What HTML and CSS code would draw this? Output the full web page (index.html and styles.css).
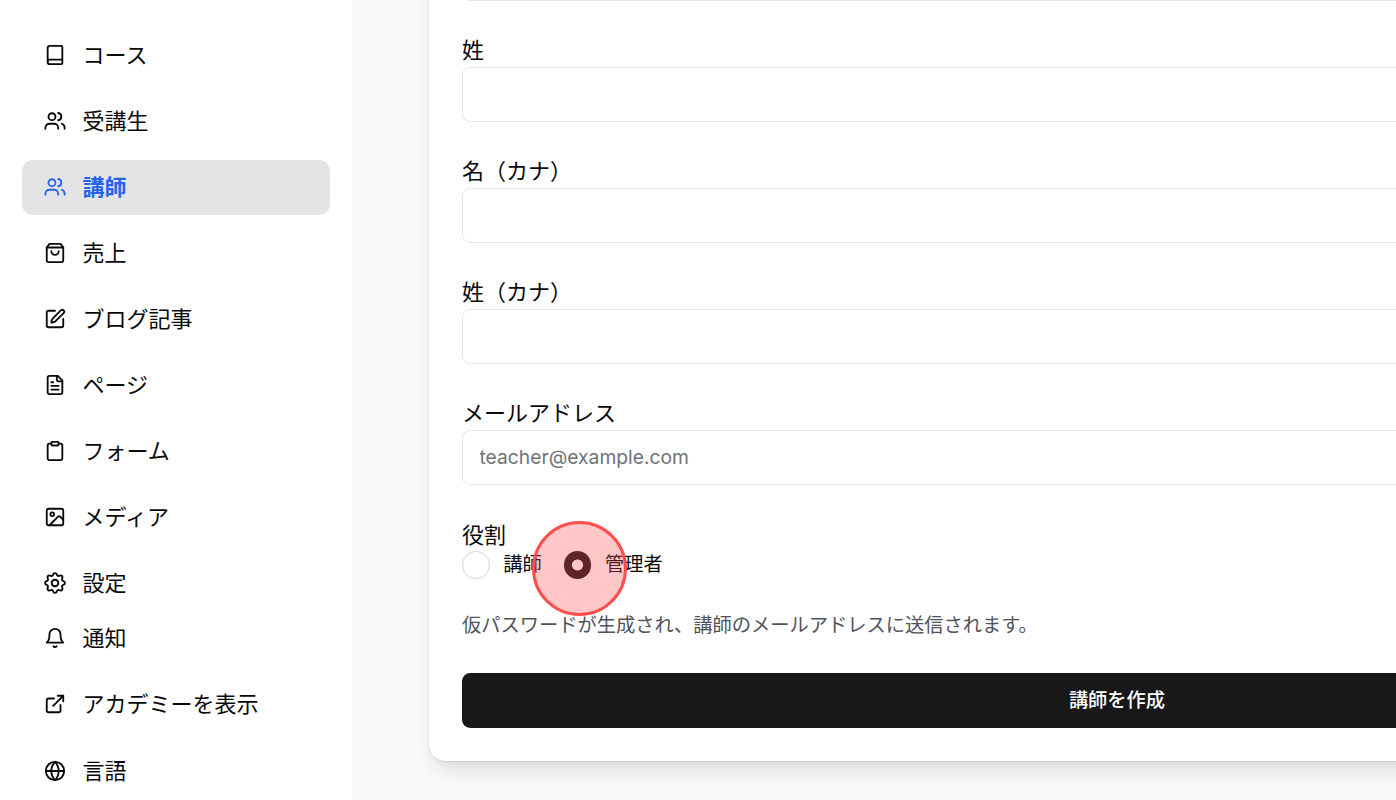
FILE: index.html
```html
<!DOCTYPE html>
<html lang="ja">
<head>
    <meta charset="UTF-8">
    <title>講師を作成</title>
    <link rel="stylesheet" href="styles.css">
</head>
<body>
    <aside class="sidebar">
        <nav class="nav-group">
            <a class="nav-item"><svg class="icon" viewBox="0 0 24 24"><path d="M4 19.5v-15A2.5 2.5 0 0 1 6.5 2H19a1 1 0 0 1 1 1v18a1 1 0 0 1-1 1H6.5a1 1 0 0 1 0-5H20"/></svg>コース</a>
            <a class="nav-item"><svg class="icon" viewBox="0 0 24 24"><path d="M1.5 20.5v-1a4.5 4.5 0 0 1 4.5-4.5h5a4.5 4.5 0 0 1 4.5 4.5v1"/><circle cx="8.7" cy="7.3" r="3.8"/><path d="M15.5 3.3a4 4 0 0 1 0 7.9"/><path d="M19.5 15a4.5 4.5 0 0 1 3 4.3v1.2"/></svg>受講生</a>
            <a class="nav-item active"><svg class="icon" viewBox="0 0 24 24"><path d="M1.5 20.5v-1a4.5 4.5 0 0 1 4.5-4.5h5a4.5 4.5 0 0 1 4.5 4.5v1"/><circle cx="8.7" cy="7.3" r="3.8"/><path d="M15.5 3.3a4 4 0 0 1 0 7.9"/><path d="M19.5 15a4.5 4.5 0 0 1 3 4.3v1.2"/></svg>講師</a>
            <a class="nav-item"><svg class="icon" viewBox="0 0 24 24"><path d="M6 2 3 6v14a2 2 0 0 0 2 2h14a2 2 0 0 0 2-2V6l-3-4Z"/><path d="M3 6h18"/><path d="M16 10a4 4 0 0 1-8 0"/></svg>売上</a>
            <a class="nav-item"><svg class="icon" viewBox="0 0 24 24"><path d="M12 3H5a2 2 0 0 0-2 2v14a2 2 0 0 0 2 2h14a2 2 0 0 0 2-2v-7"/><path d="M18.375 2.625a1 1 0 0 1 3 3l-9.013 9.014a2 2 0 0 1-.853.505l-2.873.84a.5.5 0 0 1-.62-.62l.84-2.873a2 2 0 0 1 .506-.852z"/></svg>ブログ記事</a>
            <a class="nav-item"><svg class="icon" viewBox="0 0 24 24"><path d="M15 2H6a2 2 0 0 0-2 2v16a2 2 0 0 0 2 2h12a2 2 0 0 0 2-2V7Z"/><path d="M14 2v4a2 2 0 0 0 2 2h4"/><path d="M10 9H8"/><path d="M16 13H8"/><path d="M16 17H8"/></svg>ページ</a>
            <a class="nav-item"><svg class="icon" viewBox="0 0 24 24"><rect x="8" y="2" width="8" height="4" rx="1" ry="1"/><path d="M16 4h2a2 2 0 0 1 2 2v14a2 2 0 0 1-2 2H6a2 2 0 0 1-2-2V6a2 2 0 0 1 2-2h2"/></svg>フォーム</a>
            <a class="nav-item"><svg class="icon" viewBox="0 0 24 24"><rect x="3" y="3" width="18" height="18" rx="2" ry="2"/><circle cx="9" cy="9" r="2"/><path d="m21 15-3.086-3.086a2 2 0 0 0-2.828 0L6 21"/></svg>メディア</a>
            <a class="nav-item"><svg class="icon icon-gear" viewBox="2 2 20 20"><path d="M10.325 4.317c.426-1.756 2.924-1.756 3.35 0a1.724 1.724 0 0 0 2.573 1.066c1.543-.94 3.31.826 2.37 2.37a1.724 1.724 0 0 0 1.065 2.572c1.756.426 1.756 2.924 0 3.35a1.724 1.724 0 0 0-1.066 2.573c.94 1.543-.826 3.31-2.37 2.37a1.724 1.724 0 0 0-2.572 1.065c-.426 1.756-2.924 1.756-3.35 0a1.724 1.724 0 0 0-2.573-1.066c-1.543.94-3.31-.826-2.37-2.37a1.724 1.724 0 0 0-1.065-2.572c-1.756-.426-1.756-2.924 0-3.35a1.724 1.724 0 0 0 1.066-2.573c-.94-1.543.826-3.31 2.37-2.37 1 .608 2.296.07 2.572-1.065z"/><circle cx="12" cy="12" r="3"/></svg>設定</a>
        </nav>
        <nav class="nav-group nav-group-bottom">
            <a class="nav-item"><svg class="icon" viewBox="0 0 24 24"><path d="M6 8a6 6 0 0 1 12 0c0 7 3 9 3 9H3s3-2 3-9"/><path d="M10.3 21a1.94 1.94 0 0 0 3.4 0"/></svg>通知</a>
            <a class="nav-item"><svg class="icon" viewBox="0 0 24 24"><path d="M15 3h6v6"/><path d="M10 14 21 3"/><path d="M18 13v6a2 2 0 0 1-2 2H5a2 2 0 0 1-2-2V8a2 2 0 0 1 2-2h6"/></svg>アカデミーを表示</a>
            <a class="nav-item"><svg class="icon" viewBox="0 0 24 24"><circle cx="12" cy="12" r="10"/><path d="M12 2a14.5 14.5 0 0 0 0 20 14.5 14.5 0 0 0 0-20"/><path d="M2 12h20"/></svg>言語</a>
        </nav>
    </aside>

    <main class="content">
        <form class="card">
            <div class="field">
                <input class="text-input" type="text">
            </div>
            <div class="field">
                <label class="field-label">姓</label>
                <input class="text-input" type="text">
            </div>
            <div class="field">
                <label class="field-label">名（カナ）</label>
                <input class="text-input" type="text">
            </div>
            <div class="field">
                <label class="field-label">姓（カナ）</label>
                <input class="text-input" type="text">
            </div>
            <div class="field">
                <label class="field-label">メールアドレス</label>
                <input class="text-input" type="email" placeholder="teacher@example.com">
            </div>
            <div class="field-role">
                <div class="role-label">役割</div>
                <div class="radio-row">
                    <label class="radio-option"><span class="radio"></span>講師</label>
                    <label class="radio-option"><span class="radio checked"></span>管理者</label>
                </div>
            </div>
            <p class="helper">仮パスワードが生成され、講師のメールアドレスに送信されます。</p>
            <button type="button" class="submit-button">講師を作成</button>
        </form>
    </main>

    <div class="click-marker"></div>
</body>
</html>
```

FILE: styles.css
```css
html, body {
    margin: 0;
    height: 800px;
    overflow: hidden;
}
body {
    display: flex;
    background-color: #fafafa;
    color: #09090b;
    font-family: Inter, "Noto Sans CJK JP", sans-serif;
    font-size: 22px;
}

/* Sidebar */
.sidebar {
    flex: 0 0 352px;
    box-sizing: border-box;
    height: 800px;
    padding: 27.5px 22px 0;
    background-color: #fff;
    overflow: hidden;
}
.nav-group {
    display: flex;
    flex-direction: column;
    gap: 11px;
}
.nav-group-bottom {
    gap: 11.25px;
}
.nav-item {
    display: flex;
    align-items: center;
    gap: 16.5px;
    height: 55px;
    padding: 0 22px;
    border-radius: 11px;
    line-height: 30px;
    flex-shrink: 0;
}
.nav-item.active {
    background-color: #e4e4e7;
    color: #2563eb;
    font-weight: 700;
}
.icon {
    flex: 0 0 22px;
    width: 22px;
    height: 22px;
    fill: none;
    stroke: currentColor;
    stroke-width: 2;
    stroke-linecap: round;
    stroke-linejoin: round;
}
.icon-gear {
    stroke-width: 1.7;
}

/* Form card */
.content {
    flex: 0 0 auto;
    margin-left: 77px;
    margin-top: -87px;
}
.card {
    box-sizing: border-box;
    width: 1376px;
    padding: 33px;
    background-color: #fff;
    border-radius: 16.5px;
    box-shadow: 0 14px 21px -4px rgba(0, 0, 0, 0.1), 0 6px 8px -6px rgba(0, 0, 0, 0.1), 0 0 0 1px rgba(0, 0, 0, 0.05);
}
.field {
    margin-bottom: 33px;
}
.field-label {
    display: block;
    padding-top: 1px;
    margin-bottom: 2px;
    line-height: 30px;
}
.text-input {
    display: block;
    box-sizing: border-box;
    width: 100%;
    height: 55px;
    padding: 0 16.5px 2px;
    background-color: #fff;
    border: 1px solid #e4e4e7;
    border-radius: 8.25px;
    font-family: inherit;
    font-size: 19.25px;
}
.text-input::placeholder {
    color: #71717a;
}
.role-label {
    padding-top: 2px;
    line-height: 30px;
}
.radio-row {
    display: flex;
    gap: 22px;
    margin-top: 1px;
}
.radio-option {
    display: flex;
    align-items: center;
    gap: 13.75px;
    font-size: 19.25px;
    line-height: 27.5px;
}
.radio {
    flex: 0 0 27.5px;
    box-sizing: border-box;
    height: 27.5px;
    border: 1px solid #d4d4d8;
    border-radius: 50%;
    background-color: #fff;
}
.radio.checked {
    border: none;
    background: radial-gradient(circle, #fff 5.25px, #18181b 5.75px);
}
.helper {
    margin: 33px 0 34px;
    color: #52525b;
    font-size: 19.25px;
    line-height: 27.5px;
}
.submit-button {
    display: block;
    width: 100%;
    height: 55px;
    padding: 0 0 4px;
    border: none;
    border-radius: 8.25px;
    background-color: #18181b;
    color: #fff;
    font-family: inherit;
    font-size: 19.25px;
    font-weight: 500;
}

/* Click highlight drawn over the page */
.click-marker {
    position: absolute;
    left: 532px;
    top: 521px;
    box-sizing: border-box;
    width: 95px;
    height: 95px;
    border: 3px solid #ff4d4d;
    border-radius: 50%;
    background-color: rgba(255, 68, 68, 0.3);
}
```
